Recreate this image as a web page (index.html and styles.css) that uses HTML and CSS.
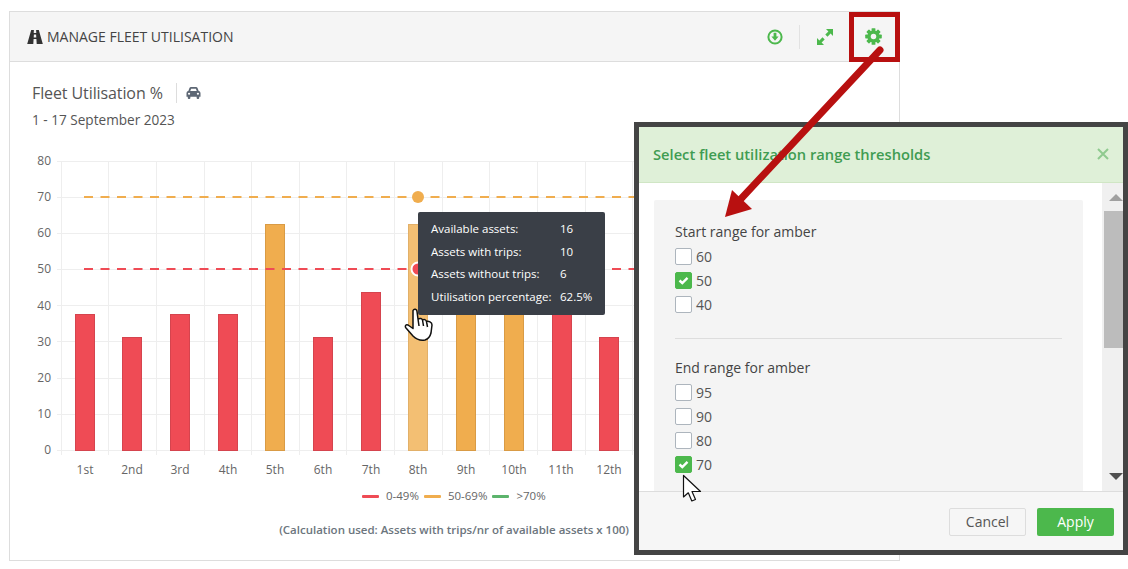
FILE: index.html
```html
<!DOCTYPE html>
<html lang="en">
<head>
<meta charset="utf-8">
<title>Manage Fleet Utilisation</title>
<link rel="stylesheet" href="styles.css">
</head>
<body>
<section class="card">
  <header class="card-head">
    <h1 class="card-title">
      <svg class="road" width="16" height="14" viewBox="0 0 16 14"><path d="M4.200 0H6.900L6.700 3H9.300L9.100 0H11.800L15.800 14H9.700L9.400 9H6.600L6.300 14H.2ZM6.900 4.600 6.700 7.400H9.300L9.100 4.600Z" fill="#333"/></svg>
      MANAGE FLEET UTILISATION
    </h1>
    <div class="tools">
      <button class="tool tool-sep" aria-label="Download">
        <svg width="16" height="16" viewBox="0 0 16 16"><circle cx="8" cy="8" r="6.600" fill="none" stroke="#4cb84c" stroke-width="2"/><path d="M6.600 3.800H9.400V7.600H11.600L8 11.800 4.400 7.600H6.600Z" fill="#4cb84c"/></svg>
      </button>
      <button class="tool" aria-label="Expand">
        <svg width="16" height="16" viewBox="0 0 16 16"><path d="M9 0H16V7L13.600 4.600 10.500 7.700 8.300 5.500 11.400 2.400ZM7 16H0V9L2.400 11.400 5.500 8.300 7.700 10.500 4.600 13.600Z" fill="#4cb84c"/></svg>
      </button>
      <button class="tool" aria-label="Settings">
        <svg width="17" height="17" viewBox="0 0 16 16">
          <g fill="#4cb84c">
            <rect x="6.200" y=".2" width="3.600" height="15.600" rx=".6"/>
            <rect x="6.200" y=".2" width="3.600" height="15.600" rx=".6" transform="rotate(45 8 8)"/>
            <rect x="6.200" y=".2" width="3.600" height="15.600" rx=".6" transform="rotate(90 8 8)"/>
            <rect x="6.200" y=".2" width="3.600" height="15.600" rx=".6" transform="rotate(135 8 8)"/>
          </g>
          <circle cx="8" cy="8" r="4.200" fill="none" stroke="#4cb84c" stroke-width="3"/>
          <circle cx="8" cy="8" r="2.600" fill="#f5f5f5"/>
        </svg>
      </button>
    </div>
  </header>
  <div class="card-body">
    <div class="chart-title">
      <h2>Fleet Utilisation %</h2>
      <span class="car">
        <svg width="15" height="12" viewBox="0 0 16 13"><path d="M3.600 1.200C3.900.5 4.500 0 5.300 0H10.700C11.500 0 12.100.5 12.400 1.200L13.600 4.400C14.900 4.700 15.600 5.600 15.600 6.800V10.500H14.200V12C14.200 12.600 13.800 13 13.200 13H12.400C11.800 13 11.400 12.600 11.400 12V10.500H4.600V12C4.600 12.600 4.200 13 3.600 13H2.800C2.200 13 1.800 12.600 1.800 12V10.500H.4V6.800C.4 5.600 1.100 4.700 2.400 4.400ZM4.500 4.300H11.500L10.600 1.900H5.400ZM3.200 6.100A1.200 1.200 0 1 0 3.200 8.500 1.200 1.200 0 1 0 3.200 6.100ZM12.800 6.100A1.200 1.200 0 1 0 12.800 8.500 1.200 1.200 0 1 0 12.800 6.100Z" fill="#5d6774" fill-rule="evenodd"/></svg>
      </span>
    </div>
    <p class="chart-date">1 - 17 September 2023</p>
    <svg class="chart" width="889" height="330" viewBox="10 150 889 330">
      <g class="grid">
        <path d="M57 161.500H880M57 197.500H880M57 233.500H880M57 269.500H880M57 305.500H880M57 341.500H880M57 378.500H880M57 414.500H880M57 450.500H880"/>
        <path d="M61.500 161V455M108.500 161V455M156.500 161V455M204.500 161V455M251.500 161V455M299.500 161V455M346.500 161V455M394.500 161V455M442.500 161V455M489.500 161V455M537.500 161V455M585.500 161V455M632.500 161V455"/>
      </g>
      <g class="ylabels">
        <text x="51" y="165">80</text><text x="51" y="201">70</text><text x="51" y="237">60</text><text x="51" y="273">50</text><text x="51" y="310">40</text><text x="51" y="346">30</text><text x="51" y="382">20</text><text x="51" y="418">10</text><text x="51" y="454">0</text>
      </g>
      <g class="xlabels">
        <text x="85" y="474">1st</text><text x="132" y="474">2nd</text><text x="180" y="474">3rd</text><text x="228" y="474">4th</text><text x="275" y="474">5th</text><text x="323" y="474">6th</text><text x="371" y="474">7th</text><text x="418" y="474">8th</text><text x="466" y="474">9th</text><text x="514" y="474">10th</text><text x="561" y="474">11th</text><text x="609" y="474">12th</text>
      </g>
      <g class="bar-red">
        <rect x="75.500" y="314.500" width="19" height="136"/>
        <rect x="122.500" y="337.500" width="19" height="113"/>
        <rect x="170.500" y="314.500" width="19" height="136"/>
        <rect x="218.500" y="314.500" width="19" height="136"/>
        <rect x="313.500" y="337.500" width="19" height="113"/>
        <rect x="361.500" y="292.500" width="19" height="158"/>
        <rect x="552.500" y="292.500" width="19" height="158"/>
        <rect x="599.500" y="337.500" width="19" height="113"/>
      </g>
      <g class="bar-amber">
        <rect x="265.500" y="224.500" width="19" height="226"/>
        <rect x="456.500" y="224.500" width="19" height="226"/>
        <rect x="504.500" y="224.500" width="19" height="226"/>
      </g>
      <rect class="bar-hover" x="408.500" y="224.500" width="19" height="226"/>
      <path class="dash-amber" d="M84 197H880"/>
      <path class="dash-red" d="M84 269H880"/>
      <circle cx="418" cy="197" r="6" fill="#f0ad4e"/>
      <circle cx="418" cy="269" r="6.500" fill="#ef4b55" stroke="#fff" stroke-width="2"/>
    </svg>
    <ul class="legend">
      <li><i class="swatch swatch-red"></i>0-49%</li>
      <li><i class="swatch swatch-amber"></i>50-69%</li>
      <li><i class="swatch swatch-green"></i>&gt;70%</li>
    </ul>
    <p class="note">(Calculation used: Assets with trips/nr of available assets x 100)</p>
  </div>
</section>

<div class="tooltip">
  <div class="tip-row"><span>Available assets:</span><span>16</span></div>
  <div class="tip-row"><span>Assets with trips:</span><span>10</span></div>
  <div class="tip-row"><span>Assets without trips:</span><span>6</span></div>
  <div class="tip-row"><span>Utilisation percentage:</span><span>62.5%</span></div>
</div>

<svg class="hand" width="30" height="34" viewBox="0 0 30 34"><path d="M9 2.500C10 .5 13 1 13 3.500L14 11C16 10 18 10.500 18.500 12 20 11 22 11.500 22.500 13.500 24.500 13 28 14 28 17L27 25C26 29 24 31 21 32 16 33 12 31 9 28L2 20C.5 18 2 16 4 17L9 20.500ZM14 11 15 18M18.500 12 19.500 18M22.500 13.500 23.500 19" fill="#fff" stroke="#111" stroke-width="1.500" stroke-linejoin="round"/></svg>

<aside class="modal">
  <header class="modal-head">
    <h3>Select fleet utilization range thresholds</h3>
    <svg width="12" height="12" viewBox="0 0 12 12"><path d="M1 1 11 11M11 1 1 11" stroke="#8fca8f" stroke-width="2"/></svg>
  </header>
  <div class="modal-body">
    <div class="panel">
      <fieldset class="group">
        <legend>Start range for amber</legend>
        <label class="check"><i class="box"></i>60</label>
        <label class="check"><i class="box on"><svg width="11" height="9" viewBox="0 0 11 9"><path d="M1.500 4.500 4.300 7 9.500 1.800" fill="none" stroke="#fff" stroke-width="2.400"/></svg></i>50</label>
        <label class="check"><i class="box"></i>40</label>
      </fieldset>
      <hr class="divider">
      <fieldset class="group">
        <legend>End range for amber</legend>
        <label class="check"><i class="box"></i>95</label>
        <label class="check"><i class="box"></i>90</label>
        <label class="check"><i class="box"></i>80</label>
        <label class="check"><i class="box on"><svg width="11" height="9" viewBox="0 0 11 9"><path d="M1.500 4.500 4.300 7 9.500 1.800" fill="none" stroke="#fff" stroke-width="2.400"/></svg></i>70</label>
      </fieldset>
    </div>
    <div class="scrollbar">
      <i class="tri tri-up"></i>
      <i class="thumb"></i>
      <i class="tri tri-down"></i>
    </div>
  </div>
  <footer class="modal-foot">
    <button class="btn btn-cancel">Cancel</button>
    <button class="btn btn-apply">Apply</button>
  </footer>
</aside>

<svg class="pointer" width="20" height="30" viewBox="0 0 20 30"><path d="M1.500 1.500V23L6.300 18.800 9.800 27 13.500 25.500 10 17.500H18.500Z" fill="#fff" stroke="#111" stroke-width="1.200" stroke-linejoin="round"/></svg>

<div class="highlight"></div>
<svg class="callout" width="1128" height="569" viewBox="0 0 1128 569">
  <path d="M880 50 738 202" stroke="#b81010" stroke-width="7" stroke-linecap="round" fill="none"/>
  <path d="M725 217 732 190 752 209Z" fill="#b81010"/>
</svg>
</body>
</html>
```
FILE: styles.css
```css
* { box-sizing: border-box; }
html, body { margin: 0; padding: 0; }
body {
  width: 1128px;
  height: 569px;
  overflow: hidden;
  background: #fff;
  color: #444;
  font-family: "Open Sans", "Liberation Sans", sans-serif;
  font-size: 14px;
  padding: 11px 0 0 9px;
}
h1, h2, h3, p, ul, fieldset, legend { margin: 0; padding: 0; border: 0; }
i { font-style: normal; }

.card { width: 891px; height: 550px; border: 1px solid #ddd; background: #fff; }
.card-head {
  height: 50px;
  display: flex;
  align-items: center;
  justify-content: space-between;
  background: #f5f5f5;
  border-bottom: 1px solid #ddd;
  padding: 0 1px 0 17px;
}
.card-title { display: flex; align-items: center; gap: 4px; font-size: 14px; font-weight: 500; color: #444; }
.tools { display: flex; align-items: center; }
.tool {
  width: 49px;
  height: 24px;
  display: flex;
  align-items: center;
  justify-content: center;
  background: none;
  border: 0;
  padding: 0;
}
.tool-sep { border-right: 1px solid #e2e2e2; }

.card-body { padding: 20px 0 0; }
.chart-title { display: flex; align-items: center; padding-left: 22px; height: 22px; }
.chart-title h2 { font-size: 16px; font-weight: 400; letter-spacing: -.1px; color: #555; padding-right: 13px; border-right: 1px solid #ddd; line-height: 20px; }
.car { display: flex; padding-left: 9px; }
.chart-date { font-size: 13.600px; color: #555; padding: 6px 0 0 22px; line-height: 20px; }
.chart { display: block; margin-top: 20px; }
.chart text { font-family: "Open Sans", "Liberation Sans", sans-serif; font-size: 12px; fill: #666; }
.ylabels text { text-anchor: end; }
.xlabels text { text-anchor: middle; }
.grid path { stroke: #eee; stroke-width: 1; fill: none; }
.bar-red rect { fill: #ef4b55; stroke: #d5444e; }
.bar-amber rect { fill: #f0ad4e; stroke: #d99b45; }
.bar-hover { fill: #f3bf73; stroke: #e2b069; }
.dash-amber { stroke: #f0ad4e; stroke-width: 2; stroke-dasharray: 9 7.5; fill: none; }
.dash-red { stroke: #ef4b55; stroke-width: 2; stroke-dasharray: 9 7.5; fill: none; }

.legend { list-style: none; display: flex; gap: 5px; padding-left: 352px; margin-top: 6px; font-size: 11.500px; color: #666; line-height: 20px; }
.legend li { display: flex; align-items: center; }
.swatch { width: 17px; height: 3px; margin-right: 7px; border-radius: 1px; }
.swatch-red { background: #ef4b55; }
.swatch-amber { background: #f0ad4e; }
.swatch-green { background: #5cb46c; }
.note { font-size: 11.500px; font-weight: 600; color: #6c757d; text-align: right; padding-right: 270px; margin-top: 14px; line-height: 20px; }

.tooltip {
  position: absolute;
  left: 418px;
  top: 212px;
  width: 187px;
  height: 103px;
  padding: 5px 0 0 13px;
  background: #3a3f47;
  border-radius: 2px;
  color: #fff;
  font-size: 11.500px;
}
.tip-row { display: flex; height: 22.700px; align-items: center; }
.tip-row span:first-child { width: 129px; }

.hand { position: absolute; left: 404px; top: 308px; }
.pointer { position: absolute; left: 682px; top: 474px; }

.modal {
  position: absolute;
  left: 634px;
  top: 122px;
  width: 494px;
  height: 433px;
  border: 5px solid #444;
  background: #fff;
  display: flex;
  flex-direction: column;
}
.modal-head {
  height: 56px;
  flex: none;
  display: flex;
  align-items: center;
  justify-content: space-between;
  padding: 0 14px 1px;
  background: #dff0d8;
  border-bottom: 1px solid #d0e6c5;
}
.modal-head h3 { font-size: 14.700px; font-weight: 600; color: #3f9c52; }
.modal-body { flex: 1; display: flex; overflow: hidden; padding: 0 0 0 15px; min-height: 0; border-bottom: 1px solid #ddd; }
.panel {
  width: 429px;
  height: 340px;
  flex: none;
  margin-top: 17px;
  background: #f4f4f4;
  border-radius: 2px;
  padding: 22px 21px 0;
}
.group { display: flex; flex-direction: column; }
.group legend { font-weight: 500; font-size: 14px; color: #444; line-height: 20px; margin-bottom: 2px; padding: 0; }
.check { display: flex; align-items: center; height: 24px; gap: 4px; font-size: 14px; color: #555; }
.box {
  width: 17px;
  height: 17px;
  display: flex;
  align-items: center;
  justify-content: center;
  background: #fff;
  border: 1px solid #adb5bd;
  border-radius: 2px;
}
.box.on { background: #4cb84c; border-color: #4cb84c; }
.divider { border: 0; border-top: 1px solid #ddd; margin: 22px 0 19px; width: 387px; }

.scrollbar {
  width: 21px;
  margin-left: 19px;
  background: #f0f0f0;
  display: flex;
  flex-direction: column;
  align-items: flex-end;
  flex: none;
}
.tri { width: 0; height: 0; border-left: 7px solid transparent; border-right: 7px solid transparent; }
.tri-up { border-bottom: 7px solid #a0a0a0; margin-top: 11px; }
.thumb { width: 19px; height: 137px; background: #bcbcbc; margin-top: 10px; }
.tri-down { border-top: 7px solid #505050; margin-top: auto; margin-bottom: 11px; }

.modal-foot {
  height: 58px;
  flex: none;
  background: #f6f6f6;
  display: flex;
  justify-content: flex-end;
  align-items: center;
  gap: 11px;
  padding: 1px 9px 0 0;
}
.btn { width: 77px; height: 28px; border-radius: 2px; font-family: "Open Sans", "Liberation Sans", sans-serif; font-size: 14px; padding: 0; }
.btn-cancel { background: #f6f6f6; border: 1px solid #ddd; color: #555; }
.btn-apply { background: #4cb84c; border: 0; color: #fff; font-weight: 500; }

.highlight { position: absolute; left: 849px; top: 12px; width: 51px; height: 50px; border: 5px solid #b81010; }
.callout { position: absolute; left: 0; top: 0; }
```
